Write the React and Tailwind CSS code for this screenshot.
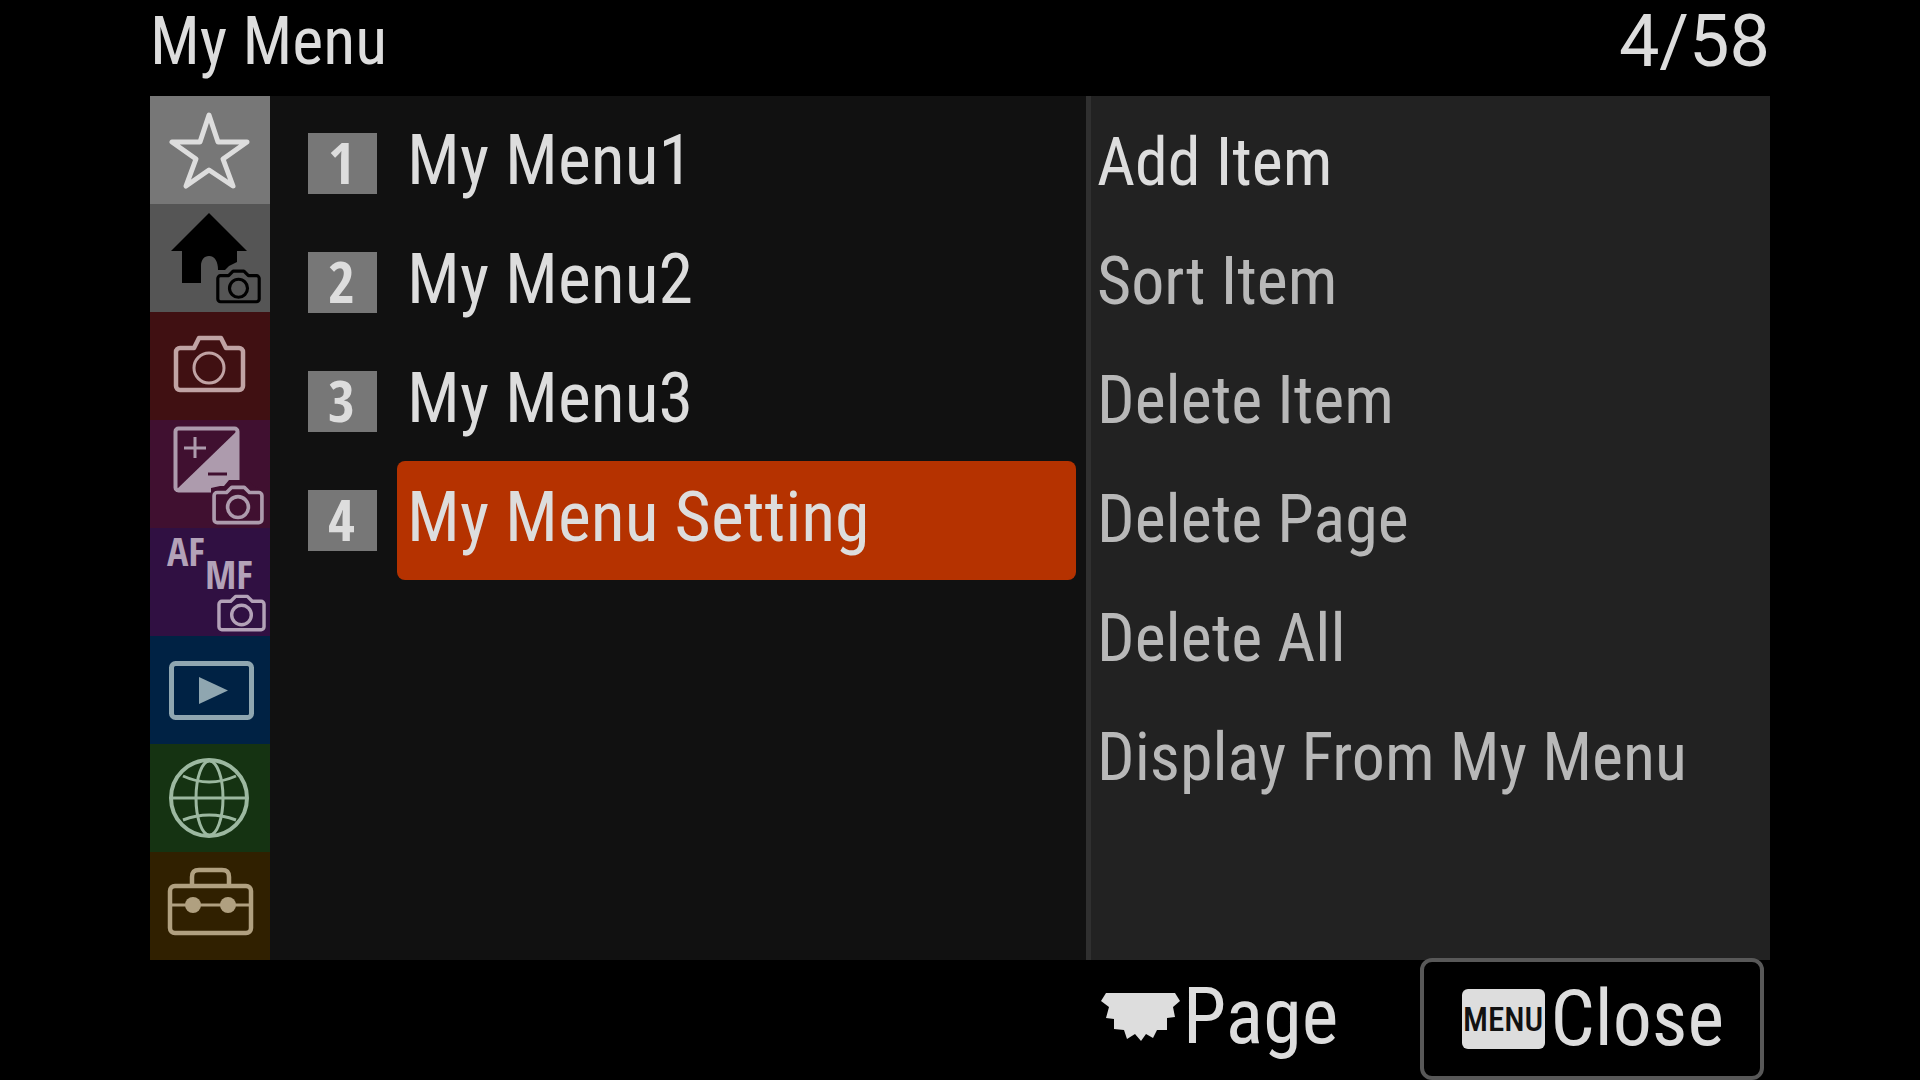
import { useState } from 'react';

const menuPages = ['My Menu1', 'My Menu2', 'My Menu3', 'My Menu Setting'];

const settings = ['Add Item', 'Sort Item', 'Delete Item', 'Delete Page', 'Delete All', 'Display From My Menu'];

function SmallCamera({ x, y, w, h }) {
  return (
    <svg x={x} y={y} width={w} height={h} viewBox="0 0 50 38" fill="none" stroke="currentColor" strokeWidth="3.5" strokeLinejoin="round">
      <path d="M5 7h9l5-5h12l5 5h9a3 3 0 0 1 3 3v23a3 3 0 0 1-3 3H5a3 3 0 0 1-3-3V10a3 3 0 0 1 3-3z" />
      <circle cx="25" cy="21" r="10" />
    </svg>
  );
}

function Cell({ children }) {
  return (
    <svg viewBox="0 0 120 108" className="block h-[108px] w-full overflow-visible" aria-hidden="true">
      {children}
    </svg>
  );
}

const tabs = [
  {
    name: 'My Menu',
    color: 'bg-[#777777] text-[#dddddd]',
    icon: (
      <Cell>
        <path d="M59 19L68 46H97L73 63L83 90L59 74L36 90L46 63L22 46H50z" fill="none" stroke="currentColor" strokeWidth="5" strokeLinejoin="round" />
      </Cell>
    ),
  },
  {
    name: 'Main',
    color: 'bg-[#555555] text-black',
    icon: (
      <Cell>
        <path d="M59 9L97 47H87V58L79 62L75 66H68C68 58 65 52 59 52C54 52 51 56 51 62V79H32V47H21z" fill="currentColor" />
        <SmallCamera x="66" y="65" w="45" h="35" />
      </Cell>
    ),
  },
  {
    name: 'Shooting',
    color: 'bg-[#401012] text-[#c0a3a4]',
    icon: (
      <Cell>
        <g fill="none" stroke="currentColor" strokeLinejoin="round">
          <path d="M30 36H44L49 26H71L76 36H89a4 4 0 0 1 4 4V74a4 4 0 0 1-4 4H30a4 4 0 0 1-4-4V40a4 4 0 0 1 4-4z" strokeWidth="4.5" />
          <circle cx="59" cy="56" r="15" strokeWidth="3" />
        </g>
      </Cell>
    ),
  },
  {
    name: 'Exposure/Color',
    color: 'bg-[#401030] text-[#ad9bad]',
    icon: (
      <Cell>
        <path d="M26 70L88 10V72H26z" fill="currentColor" />
        <rect x="25.5" y="8.5" width="62" height="62" rx="3" fill="none" stroke="currentColor" strokeWidth="4" />
        <path d="M34 28H56M45 17V38" stroke="currentColor" strokeWidth="3" />
        <path d="M58 54H77" stroke="#401030" strokeWidth="3" />
        <path d="M61 76V68L70 66H74L79 60H98L104 66L112 71V76z" fill="#401030" />
        <SmallCamera x="62" y="65" w="52" h="40" />
      </Cell>
    ),
  },
  {
    name: 'Focus',
    color: 'bg-[#301042] text-[#b3a2b8]',
    icon: (
      <Cell>
        <g fill="currentColor" fontFamily="'Open Sans Condensed', 'Roboto Condensed', sans-serif" fontWeight="700" fontSize="40">
          <text x="17" y="38">AF</text>
          <text x="55" y="61">MF</text>
        </g>
        <SmallCamera x="67" y="66" w="49" h="38" />
      </Cell>
    ),
  },
  {
    name: 'Playback',
    color: 'bg-[#002244] text-[#8fa6b0]',
    icon: (
      <Cell>
        <rect x="21.5" y="27.5" width="80" height="54" rx="4" fill="none" stroke="currentColor" strokeWidth="5" />
        <path d="M49 41L78 54.5L49 68z" fill="currentColor" />
      </Cell>
    ),
  },
  {
    name: 'Network',
    color: 'bg-[#153312] text-[#9cb8a0]',
    icon: (
      <Cell>
        <g fill="none" stroke="currentColor" strokeWidth="3">
          <circle cx="59" cy="54" r="38" strokeWidth="4" />
          <ellipse cx="59.5" cy="54" rx="13.5" ry="37" />
          <path d="M21 54H97M33 32Q59 44 86 32M33 76Q59 66 86 76" />
        </g>
      </Cell>
    ),
  },
  {
    name: 'Setup',
    color: 'bg-[#302000] text-[#b0a080]',
    icon: (
      <Cell>
        <g fill="none" stroke="currentColor" strokeWidth="4.5">
          <rect x="20" y="34" width="81" height="47" rx="5" />
          <path d="M42 34V25C42 20 44 18 49 18H72C77 18 79 20 79 25V34" />
          <path d="M20 53H101" strokeWidth="3" />
        </g>
        <circle cx="43" cy="53" r="8" fill="currentColor" />
        <circle cx="78" cy="53" r="8" fill="currentColor" />
      </Cell>
    ),
  },
];

function DialIcon() {
  return (
    <svg viewBox="0 0 80 48" className="h-12 w-20" aria-hidden="true">
      <path
        d="M5 0H74L79 8L72 14L74 24L66 25V37L56 37L52 45L45 41L40 48L34 41L26 46L23 37L13 36V26L5 25L8 14L0 8z"
        fill="currentColor"
      />
    </svg>
  );
}

export default function App() {
  const [page, setPage] = useState(3);

  return (
    <div className="min-h-screen bg-black px-[150px] font-['Roboto_Condensed',Roboto,sans-serif] text-[#dddddd]">

      {/* HEADER */}
      <header className="flex h-24 items-center justify-between pb-3 leading-none">
        <h1 className="text-[66px]">My Menu</h1>
        <p className="font-[Roboto,sans-serif] text-[72px]">4/58</p>
      </header>

      <main className="grid min-h-[864px] grid-cols-[120px_68fr_57fr]">
        {/* CATEGORIES */}
        <nav className="flex flex-col">
          {tabs.map((t) => (
            <button key={t.name} aria-label={t.name} className={`block ${t.color}`}>
              {t.icon}
            </button>
          ))}
        </nav>

        {/* PAGES */}
        <ul className="bg-[#111111] py-2 pr-2.5 pl-[38px]">
          {menuPages.map((label, i) => (
            <li key={label}>
              <button onClick={() => setPage(i)} className="flex h-[119px] w-full items-center gap-5 text-left">
                <span className="flex h-[61px] w-[69px] shrink-0 items-center justify-center bg-[#777777] pr-0.5 pb-1 font-['Open_Sans_Condensed','Roboto_Condensed',sans-serif] text-[58px] leading-none font-bold">
                  {i + 1}
                </span>
                <span className={`flex h-full flex-1 items-center rounded-lg pb-2 pl-2.5 text-[70px] leading-none ${page === i ? 'bg-[#b53200]' : ''}`}>
                  {label}
                </span>
              </button>
            </li>
          ))}
        </ul>

        {/* SETTINGS */}
        <ul className="border-l-5 border-[#303030] bg-[#222222] py-2 pl-1.5">
          {settings.map((label, i) => (
            <li key={label}>
              <button className={`flex h-[119px] w-full items-center pb-0.5 text-left text-[66px] leading-none ${i === 0 ? '' : 'text-[#b8b8b8]'}`}>
                {label}
              </button>
            </li>
          ))}
        </ul>
      </main>

      {/* FOOTER */}
      <footer className="grid grid-cols-[120px_68fr_57fr] text-[78px] leading-none">
        <div className="col-start-3 -mt-0.5 flex h-[122px] items-center justify-between pr-1.5 pl-[15px]">
          <button className="flex items-center gap-0.5 pb-1">
            <DialIcon />
            Page
          </button>
          <button className="flex h-full items-center gap-1.5 rounded-xl border-4 border-[#585858] bg-black pr-9 pl-[38px]">
            <span className="flex h-[60px] w-[83px] items-center justify-center rounded-md bg-[#dddddd] text-[33px] font-medium text-[#111111]">
              MENU
            </span>
            Close
          </button>
        </div>
      </footer>
    </div>
  );
}
